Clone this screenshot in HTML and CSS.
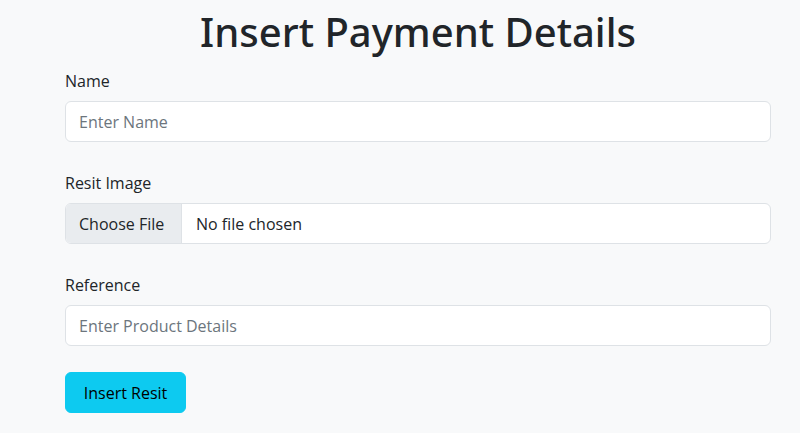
FILE: index.html
```html
<!DOCTYPE html>
<html lang="en">
<head>
<meta charset="utf-8">
<title>Insert Payment Details</title>
<link rel="stylesheet" href="styles.css">
</head>
<body>
<main class="page">
  <h1 class="title">Insert Payment Details</h1>
  <form class="form">
    <div class="field">
      <label class="label" for="name">Name</label>
      <input class="control" id="name" type="text" placeholder="Enter Name">
    </div>
    <div class="field">
      <span class="label">Resit Image</span>
      <label class="control file">
        <input class="file-input" type="file">
        <span class="file-btn">Choose File</span>
        <span class="file-name">No file chosen</span>
      </label>
    </div>
    <div class="field">
      <label class="label" for="ref">Reference</label>
      <input class="control" id="ref" type="text" placeholder="Enter Product Details">
    </div>
    <button class="btn" type="button">Insert Resit</button>
  </form>
</main>
</body>
</html>
```
FILE: styles.css
```css
* { box-sizing: border-box; }
html, body { margin: 0; }
body {
  background: #f8f9fa;
  color: #212529;
  font-family: "Open Sans", "Noto Sans", sans-serif;
  font-size: 16px;
}
.page {
  width: 706px;
  margin-left: 65px;
  padding-top: 8px;
}
.title {
  margin: 0 0 13px;
  text-align: center;
  font-family: "Noto Sans", "Open Sans", sans-serif;
  font-size: 40px;
  font-weight: 500;
  line-height: 48px;
  color: #212529;
}
.form { display: flex; flex-direction: column; }
.field {
  display: flex;
  flex-direction: column;
  margin-bottom: 29px;
}
.field:last-of-type { margin-bottom: 26px; }
.label {
  display: block;
  line-height: 24px;
  margin-bottom: 8px;
}
.control {
  height: 41px;
  width: 100%;
  border: 1px solid #dee2e6;
  border-radius: 6px;
  background: #fff;
  padding: 0 13px;
  font: inherit;
  color: #212529;
  outline: none;
}
.control::placeholder { color: #6c757d; }
.file {
  display: flex;
  align-items: stretch;
  padding: 0;
  overflow: hidden;
  cursor: pointer;
}
.file-input { display: none; }
.file-btn {
  display: flex;
  align-items: center;
  padding: 0 13px;
  background: #e9ecef;
  border-right: 1px solid #dee2e6;
  width: 116px;
}
.file-name {
  display: flex;
  align-items: center;
  padding-left: 14px;
}
.btn {
  align-self: flex-start;
  height: 41px;
  width: 121px;
  border: 1px solid #0dcaf0;
  border-radius: 6px;
  background: #0dcaf0;
  color: #000;
  font: inherit;
  padding: 0;
  cursor: pointer;
}
```
